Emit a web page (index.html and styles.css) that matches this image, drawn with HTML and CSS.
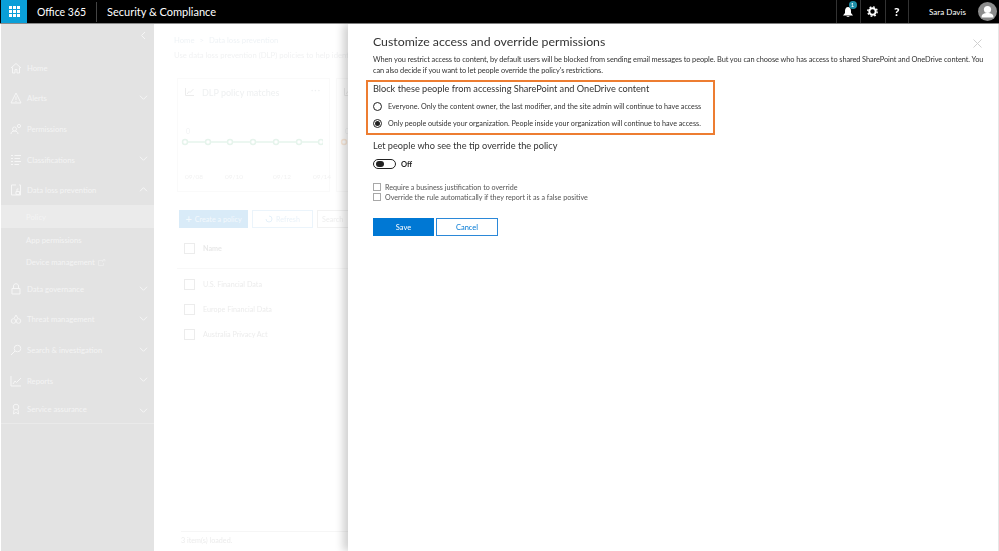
FILE: index.html
```html
<!DOCTYPE html>
<html lang="en">
<head>
<meta charset="utf-8">
<title>Security &amp; Compliance</title>
<link rel="stylesheet" href="styles.css">
</head>
<body>
<div class="page">
<header class="topbar">
  <div class="waffle"><svg width="11" height="11" viewBox="0 0 11 11" fill="#fff"><rect width="3" height="3"/><rect x="4" width="3" height="3"/><rect x="8" width="3" height="3"/><rect y="4" width="3" height="3"/><rect x="4" y="4" width="3" height="3"/><rect x="8" y="4" width="3" height="3"/><rect y="8" width="3" height="3"/><rect x="4" y="8" width="3" height="3"/><rect x="8" y="8" width="3" height="3"/></svg></div>
  <div class="brand">Office 365</div>
  <div class="app">Security &amp; Compliance</div>
  <div class="spacer"></div>
  <div class="tool bell"><svg width="10" height="12" viewBox="0 0 10 12" fill="#fff"><path d="M5 1C3 1 2 3 2 5v2L0 9.500h10L8 7V5C8 3 7 1 5 1zM3.500 10.200h3C6.300 11.400 3.700 11.400 3.500 10.200z"/></svg><span class="badge">1</span></div>
  <div class="tool"><svg width="11" height="11" viewBox="0 0 11 11"><circle cx="5.500" cy="5.500" r="3.200" fill="none" stroke="#fff" stroke-width="2"/><circle cx="5.500" cy="5.500" r="4.700" fill="none" stroke="#fff" stroke-width="1.400" stroke-dasharray="1.800 1.900"/></svg></div>
  <div class="tool help">?</div>
  <div class="user">Sara Davis</div>
  <div class="avatar"><svg width="19" height="19" viewBox="0 0 19 19"><circle cx="9.500" cy="9.500" r="9.500" fill="#8c8c8c"/><circle cx="9.500" cy="7.500" r="3.600" fill="#fff"/><path d="M3.500 15.500c0-3.500 2.500-4.500 6-4.500s6 1 6 4.500z" fill="#fff"/></svg></div>
</header>
<div class="workspace">
  <nav class="sidebar">
    <div class="collapse"><svg width="6" height="9" viewBox="0 0 6 9"><path d="M5 1L1.500 4.500 5 8" class="ic"/></svg></div>
    <a class="row"><svg class="ni" width="12" height="12" viewBox="0 0 12 12"><path d="M1 6l5-4.500L11 6M2.500 5.500V11H5V7.500h2V11h2.500V5.500" class="ic"/></svg><span>Home</span></a>
    <a class="row"><svg class="ni" width="12" height="12" viewBox="0 0 12 12"><path d="M6 1l5 10H1zM6 4.500V8M6 9v1" class="ic"/></svg><span>Alerts</span><svg class="chev" width="9" height="5" viewBox="0 0 9 5"><path d="M1 .8l3.500 3.500L8 .8" class="ic"/></svg></a>
    <a class="row"><svg class="ni" width="12" height="12" viewBox="0 0 12 12"><circle cx="4.500" cy="6" r="2" class="ic"/><circle cx="9" cy="3" r="1.600" class="ic"/><path d="M1 11c0-2 1.500-3 3.500-3S8 9 8 11" class="ic"/></svg><span>Permissions</span></a>
    <a class="row"><svg class="ni" width="12" height="12" viewBox="0 0 12 12"><path d="M1 1.500h2M1 4.500h2M1 7.500h2M1 10.500h2M4.500 1.500H11M4.500 4.500H10M4.500 7.500H11M4.500 10.500H9" class="ic"/></svg><span>Classifications</span><svg class="chev" width="9" height="5" viewBox="0 0 9 5"><path d="M1 .8l3.500 3.500L8 .8" class="ic"/></svg></a>
    <a class="row"><svg class="ni" width="12" height="12" viewBox="0 0 12 12"><path d="M6 1H1.500v10h9V1H9M6 7.500h3.500v3H6zM7 7.500V5h1.500" class="ic"/></svg><span>Data loss prevention</span><svg class="chev" width="9" height="5" viewBox="0 0 9 5"><path d="M1 4.200L4.500.7 8 4.200" class="ic"/></svg></a>
    <a class="sub current">Policy</a>
    <a class="sub">App permissions</a>
    <a class="sub">Device management <svg width="8" height="7" viewBox="0 0 8 7"><path d="M5 1.500H.5v5h5V4M4 3l3-2.500M5 .5h2v2" class="ic-dim"/></svg></a>
    <a class="row"><svg class="ni" width="12" height="12" viewBox="0 0 12 12"><path d="M2 5.500h8V11H2zM3.500 5.500V3c0-3 5-3 5 0v2.500" class="ic"/></svg><span>Data governance</span><svg class="chev" width="9" height="5" viewBox="0 0 9 5"><path d="M1 .8l3.500 3.500L8 .8" class="ic"/></svg></a>
    <a class="row"><svg class="ni" width="12" height="12" viewBox="0 0 12 12"><circle cx="3.500" cy="8" r="2.300" class="ic"/><circle cx="8.500" cy="8" r="2.300" class="ic"/><path d="M4 5.500L6 2l2 3.500" class="ic"/></svg><span>Threat management</span><svg class="chev" width="9" height="5" viewBox="0 0 9 5"><path d="M1 .8l3.500 3.500L8 .8" class="ic"/></svg></a>
    <a class="row"><svg class="ni" width="12" height="12" viewBox="0 0 12 12"><circle cx="7.500" cy="4.500" r="3.300" class="ic"/><path d="M5 7L1 11" class="ic"/></svg><span>Search &amp; investigation</span><svg class="chev" width="9" height="5" viewBox="0 0 9 5"><path d="M1 .8l3.500 3.500L8 .8" class="ic"/></svg></a>
    <a class="row"><svg class="ni" width="12" height="12" viewBox="0 0 12 12"><path d="M1 1v10h10M3 9l2-3 1.500 1.500L11 3" class="ic"/></svg><span>Reports</span><svg class="chev" width="9" height="5" viewBox="0 0 9 5"><path d="M1 .8l3.500 3.500L8 .8" class="ic"/></svg></a>
    <a class="row last"><svg class="ni" width="12" height="12" viewBox="0 0 12 12"><circle cx="6" cy="4" r="2.800" class="ic"/><path d="M4 6.500L3.500 11 6 9.500 8.500 11 8 6.500" class="ic"/></svg><span>Service assurance</span><svg class="chev" width="9" height="5" viewBox="0 0 9 5"><path d="M1 .8l3.500 3.500L8 .8" class="ic"/></svg></a>
  </nav>
  <main class="main">
    <div class="crumbs"><span>Home</span><span>&gt;</span><span>Data loss prevention</span></div>
    <p class="intro">Use data loss prevention (DLP) policies to help identify</p>
    <div class="cards">
      <section class="card">
        <div class="card-head"><svg width="9" height="8" viewBox="0 0 9 8"><path d="M.5 0v7.500H9M2 6l2-2.500 1 1L8.500 1" class="ic-faint"/></svg><span>DLP policy matches</span><i>···</i></div>
        <div class="zero">0</div>
        <svg class="plot" width="142" height="8" viewBox="0 0 142 8"><path d="M4 4h136" class="plot-line"/><circle cx="4" cy="4" r="2.500" class="plot-dot"/><circle cx="27" cy="4" r="2.500" class="plot-dot"/><circle cx="49" cy="4" r="2.500" class="plot-dot"/><circle cx="72" cy="4" r="2.500" class="plot-dot"/><circle cx="95" cy="4" r="2.500" class="plot-dot"/><circle cx="118" cy="4" r="2.500" class="plot-dot"/><circle cx="140" cy="4" r="2.500" class="plot-dot"/></svg>
        <div class="dates"><span>09/08</span><span>09/10</span><span>09/12</span><span>09/14</span></div>
      </section>
      <section class="card second">
        <div class="card-head"><svg width="9" height="8" viewBox="0 0 9 8"><path d="M.5 0v7.500H9M2 6l2-2.500 1 1L8.500 1" class="ic-faint"/></svg></div>
        <div class="zero">0</div>
        <svg class="plot" width="12" height="8" viewBox="0 0 12 8"><circle cx="4" cy="4" r="2.500" class="plot-dot orange"/></svg>
      </section>
    </div>
    <div class="actions">
      <span class="btn primary"><b>+</b> Create a policy</span>
      <span class="btn refresh"><svg width="8" height="8" viewBox="0 0 8 8"><path d="M4 1a3 3 0 1 1-3 3" class="ic-blue"/></svg> Refresh</span>
      <span class="btn search">Search</span>
    </div>
    <div class="table-head"><span class="box"></span><strong>Name</strong></div>
    <div class="table-row"><span class="box"></span>U.S. Financial Data</div>
    <div class="table-row"><span class="box"></span>Europe Financial Data</div>
    <div class="table-row"><span class="box"></span>Australia Privacy Act</div>
    <div class="loaded">3 item(s) loaded.</div>
  </main>
  <aside class="panel">
    <button class="close" aria-label="Close"><svg width="9" height="9" viewBox="0 0 9 9"><path d="M.5.500l8 8M8.500.500l-8 8" fill="none" stroke="#d0d0d0" stroke-width="1"/></svg></button>
    <h1>Customize access and override permissions</h1>
    <p class="lead">When you restrict access to content, by default users will be blocked from sending email messages to people. But you can choose who has access to shared SharePoint and OneDrive content. You can also decide if you want to let people override the policy's restrictions.</p>
    <div class="callout">
      <h2>Block these people from accessing SharePoint and OneDrive content</h2>
      <label class="radio"><span class="dot"></span>Everyone. Only the content owner, the last modifier, and the site admin will continue to have access</label>
      <label class="radio"><span class="dot on"></span>Only people outside your organization. People inside your organization will continue to have access.</label>
    </div>
    <h2 class="override">Let people who see the tip override the policy</h2>
    <div class="toggle-row"><span class="toggle"></span><span>Off</span></div>
    <label class="check"><span class="tick"></span>Require a business justification to override</label>
    <label class="check"><span class="tick"></span>Override the rule automatically if they report it as a false positive</label>
    <div class="panel-actions"><span class="save">Save</span><span class="cancel">Cancel</span></div>
  </aside>
</div>
</div>
</body>
</html>
```
FILE: styles.css
```css
* { box-sizing: border-box; }
html, body { margin: 0; padding: 0; height: 100%; overflow: hidden; background: #fff; }
body { font-family: Lato, "Open Sans", "Liberation Sans", sans-serif; }
.page { width: 999px; height: 551px; display: flex; flex-direction: column; filter: blur(0.4px); }

.topbar { height: 24px; flex: none; display: flex; align-items: center; background: #000; color: #fff; border-bottom: 1px solid #8a8a8a; padding-left: 1px; }
.waffle { width: 26px; height: 23px; background: #0a9fd8; display: flex; align-items: center; justify-content: center; }
.brand { font-size: 10.500px; margin-left: 10px; width: 60px; height: 20px; line-height: 20px; border-right: 1px solid #444; flex: none; margin-right: 10px; }
.app { font-size: 11px; }
.spacer { flex: 1; }
.tool { width: 24.500px; height: 23px; border-left: 1px solid #333; display: flex; align-items: center; justify-content: center; position: relative; font-weight: 900; font-size: 12px; }
.badge { position: absolute; top: 1px; left: 12px; width: 8px; height: 8px; border-radius: 50%; background: #1f8fa8; font-size: 6px; font-weight: 400; line-height: 8px; text-align: center; }
.help { border-right: 1px solid #333; }
.user { font-size: 8.100px; margin-left: 20px; width: 46px; }
.avatar { width: 19px; height: 19px; margin-right: 2px; margin-left: 3px; }

.workspace { flex: 1; min-height: 0; display: flex; }
.sidebar { width: 153px; margin-left: 1px; flex: none; background: #e3e3e3; color: #f4f4f4; font-size: 7.700px; padding-top: 4px; }
.collapse { height: 24.500px; padding: 3px 0 0 139px; display: flex; }
.ic { fill: none; stroke: #f6f6f6; stroke-width: 1; }
.ic-dim { fill: none; stroke: #eeeeee; stroke-width: .8; }
.ic-faint { fill: none; stroke: #ececec; stroke-width: 1; }
.row { height: 30.600px; display: flex; align-items: center; padding-left: 9px; position: relative; }
.row span { margin-left: 5px; }
.ni { flex: none; }
.chev { position: absolute; right: 6px; top: 12px; }
.row.last { height: 28px; border-bottom: 1px solid #eaeaea; }
.sub { height: 22.700px; display: flex; align-items: center; gap: 3px; padding-left: 25px; }
.sub.current { background: #ebebeb; }

.main { width: 194px; flex: none; overflow: hidden; padding: 10px 0 0 20px; color: #f1f2f3; font-size: 7.200px; position: relative; }
.crumbs { display: flex; gap: 5px; color: #eff3f6; height: 12px; line-height: 12px; white-space: nowrap; font-size: 7.700px; }
.intro { margin: 3px 0 0; white-space: nowrap; height: 12px; line-height: 12px; font-size: 7.700px; }
.cards { display: flex; gap: 6px; margin: 17px 0 0 3px; }
.card { width: 153px; height: 114px; flex: none; border: 1px solid #fafafa; padding: 0 0 0 7px; }
.card-head { display: flex; align-items: center; gap: 8px; height: 25px; padding-top: 1px; font-size: 9px; color: #eef0f1; position: relative; white-space: nowrap; }
.card-head i { position: absolute; right: 8px; top: 5px; font-style: normal; font-size: 9px; letter-spacing: 1px; }
.zero { margin: 21px 0 0 0; height: 12px; line-height: 12px; padding-left: 1px; font-size: 7px; }
.plot { display: block; margin-top: 1px; margin-left: -4px; }
.plot-line { stroke: #e6f4ec; stroke-width: 1.500; fill: none; }
.plot-dot { fill: #fff; stroke: #e6f4ec; stroke-width: 1.500; }
.plot-dot.orange { stroke: #fbeadb; }
.dates { display: flex; gap: 22px; margin: 27px 0 0; font-size: 6.500px; color: #f2f2f2; }
.dates span:nth-child(3) { margin-left: 8px; }
.actions { display: flex; gap: 4px; margin: 18px 0 0 5px; }
.btn { height: 18px; flex: none; display: flex; align-items: center; justify-content: center; gap: 3px; white-space: nowrap; }
.primary { width: 69px; background: #d9ebf8; color: #f4f9fd; }
.primary b { font-weight: 400; font-size: 11px; line-height: 10px; }
.refresh { width: 61px; border: 1px solid #ebf4fb; color: #eaf2f9; }
.ic-blue { fill: none; stroke: #e4f0f9; stroke-width: 1; }
.search { width: 40px; border: 1px solid #f2f2f2; color: #eeeeee; justify-content: flex-start; padding-left: 4px; }
.table-head { display: flex; align-items: center; gap: 8px; height: 41px; margin-left: 3px; padding-left: 7px; border-bottom: 1px solid #f8f8f8; }
.table-head strong { font-weight: 700; color: #e8e8e8; }
.table-row { display: flex; align-items: center; gap: 8px; height: 25px; margin-left: 3px; padding-left: 7px; color: #ececec; white-space: nowrap; }
.table-head + .table-row { margin-top: 3px; }
.box { width: 11px; height: 11px; border: 1px solid #ececec; flex: none; }
.loaded { position: absolute; left: 27px; top: 507px; right: 0; border-top: 1px solid #f6f6f6; height: 20px; line-height: 18px; color: #ececec; }

.panel { flex: 1; position: relative; background: #fff; box-shadow: -5px 0 8px rgba(0,0,0,.18); border-right: 1px solid #e6e6e6; padding: 9px 0 0 25px; color: #333; }
.close { position: absolute; right: 16px; top: 15px; padding: 0; border: 0; background: none; line-height: 0; }
h1 { margin: 0; font-size: 12.300px; line-height: 18px; font-weight: 400; color: #333; white-space: nowrap; }
.lead { margin: 3px 0 0; width: 615px; font-size: 7.400px; letter-spacing: -0.09px; line-height: 11px; color: #333; }
.callout { margin: 4px 0 0 -7px; width: 349px; height: 55px; border: 2px solid #ed7d31; padding: 0 0 0 5px; }
h2 { margin: 0; font-size: 9.200px; font-weight: 400; line-height: 13px; color: #333; white-space: nowrap; }
.radio { display: flex; align-items: center; gap: 6px; height: 17px; font-size: 7.200px; white-space: nowrap; color: #333; margin-top: 3px; }
.radio + .radio { margin-top: 0; }
.dot { width: 9px; height: 9px; border: 1px solid #222; border-radius: 50%; flex: none; display: flex; align-items: center; justify-content: center; }
.dot.on::after { content: ""; width: 5px; height: 5px; border-radius: 50%; background: #222; }
.override { margin-top: 4px; }
.toggle-row { display: flex; align-items: center; gap: 5px; margin-top: 7px; height: 10px; font-size: 7.500px; font-weight: 700; color: #222; }
.toggle { width: 23px; height: 10px; border: 1.500px solid #222; border-radius: 5px; display: flex; align-items: center; padding-left: 2px; }
.toggle::after { content: ""; width: 8px; height: 6px; border-radius: 3px; background: #222; }
.check { display: flex; align-items: center; gap: 4px; height: 10px; font-size: 7.150px; white-space: nowrap; color: #555; }
.toggle-row + .check { margin-top: 13px; }
.tick { width: 8px; height: 8px; border: 1px solid #a8a8a8; flex: none; }
.panel-actions { display: flex; gap: 2px; margin-top: 16px; font-size: 7.500px; }
.save, .cancel { height: 18px; display: flex; align-items: center; justify-content: center; }
.save { width: 61px; background: #0078d4; color: #fff; }
.cancel { width: 62px; border: 1px solid #2b88d8; color: #0078d4; }
```
